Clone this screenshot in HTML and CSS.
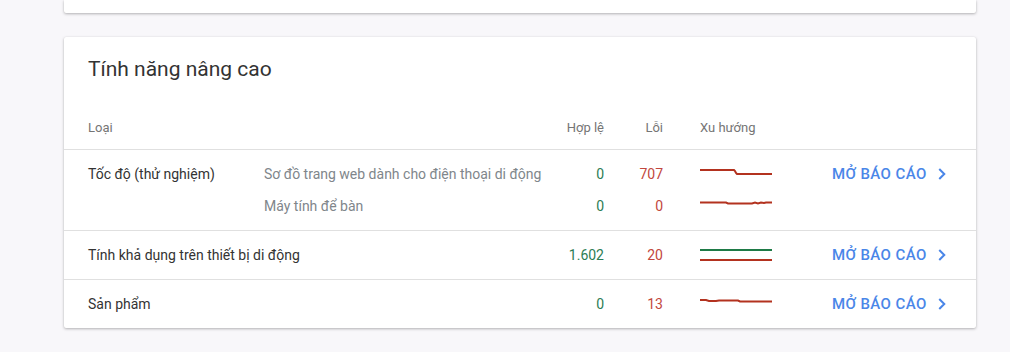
FILE: index.html
```html
<!DOCTYPE html>
<html lang="vi">
<head>
    <meta charset="UTF-8">
    <title>Tính năng nâng cao</title>
    <link rel="stylesheet" href="styles.css">
</head>
<body>
    <!-- Previous card, only its bottom edge is visible -->
    <div class="card card-top"></div>

    <!-- Enhancements card -->
    <div class="card">
        <h2 class="card-title">Tính năng nâng cao</h2>

        <div class="grid head">
            <div class="cell type">Loại</div>
            <div class="cell sub"></div>
            <div class="cell num">Hợp lệ</div>
            <div class="cell num">Lỗi</div>
            <div class="cell trend">Xu hướng</div>
            <div class="cell"></div>
        </div>

        <!-- Speed (experimental) -->
        <div class="row">
            <div class="grid">
                <div class="cell type">Tốc độ (thử nghiệm)</div>
                <div class="cell sub">Sơ đồ trang web dành cho điện thoại di động</div>
                <div class="cell num good">0</div>
                <div class="cell num bad">707</div>
                <div class="cell trend">
                    <svg width="72" height="12" viewBox="0 0 72 12">
                        <polyline class="line-bad" points="0,2 34,2 35,3 36,5 37,6 72,6"/>
                    </svg>
                </div>
                <a class="cell link" href="#">Mở báo cáo
                    <svg width="24" height="24" viewBox="0 0 24 24"><path d="M9 6.5l5.5 5.5L9 17.5" /></svg>
                </a>
            </div>
            <div class="grid">
                <div class="cell type"></div>
                <div class="cell sub">Máy tính để bàn</div>
                <div class="cell num good">0</div>
                <div class="cell num bad">0</div>
                <div class="cell trend">
                    <svg width="72" height="12" viewBox="0 0 72 12">
                        <polyline class="line-bad" points="0,2.5 26,2.5 28,3.5 52,3.5 55,2.5 58,3.5 61,2.5 64,3 66,2.5 72,2.5"/>
                    </svg>
                </div>
                <div class="cell"></div>
            </div>
        </div>

        <!-- Mobile usability -->
        <div class="row">
            <div class="grid">
                <div class="cell type wide">Tính khả dụng trên thiết bị di động</div>
                <div class="cell num good">1.602</div>
                <div class="cell num bad">20</div>
                <div class="cell trend">
                    <svg width="72" height="16" viewBox="0 0 72 16">
                        <polyline class="line-good" points="0,3 72,3"/>
                        <polyline class="line-bad" points="0,13 72,13"/>
                    </svg>
                </div>
                <a class="cell link" href="#">Mở báo cáo
                    <svg width="24" height="24" viewBox="0 0 24 24"><path d="M9 6.5l5.5 5.5L9 17.5" /></svg>
                </a>
            </div>
        </div>

        <!-- Products -->
        <div class="row">
            <div class="grid">
                <div class="cell type wide">Sản phẩm</div>
                <div class="cell num good">0</div>
                <div class="cell num bad">13</div>
                <div class="cell trend">
                    <svg width="72" height="12" viewBox="0 0 72 12">
                        <polyline class="line-bad" points="0,2 6,2 9,3 16,3 19,2.5 26,2.5 38,2.5 40,3.5 72,3.5"/>
                    </svg>
                </div>
                <a class="cell link" href="#">Mở báo cáo
                    <svg width="24" height="24" viewBox="0 0 24 24"><path d="M9 6.5l5.5 5.5L9 17.5" /></svg>
                </a>
            </div>
        </div>
    </div>
</body>
</html>
```

FILE: styles.css
```css
/* Page */
body {
    margin: 0;
    padding: 0 34px 0 64px;
    background: #f8f7fa;
    font-family: Roboto, 'Noto Sans', Arial, sans-serif;
    color: #333;
}

.card {
    background: #fff;
    border-radius: 2px;
    box-shadow: 0 1px 3px rgba(0, 0, 0, 0.28), 0 0 1px rgba(0, 0, 0, 0.08);
    margin-bottom: 24px;
}

.card-top {
    height: 13px;
    border-radius: 0 0 2px 2px;
}

.card-title {
    margin: 0;
    padding: 18px 24px 0;
    height: 46px;
    font-size: 21px;
    font-weight: 400;
    line-height: 28px;
    color: #333;
}

/* Table grid */
.grid {
    display: grid;
    grid-template-columns: 200px 280px 60px 59px 109px 1fr;
    align-items: center;
}

.cell {
    font-size: 14px;
    line-height: 20px;
    white-space: nowrap;
}

.type {
    padding-left: 24px;
}

.type.wide {
    grid-column: span 2;
}

.sub {
    color: #80868b;
}

.num {
    text-align: right;
}

.trend {
    padding-left: 37px;
    display: flex;
    align-items: center;
}

.trend svg {
    display: block;
}

.head {
    height: 42px;
    padding-top: 6px;
    border-bottom: 1px solid #e0e0e0;
}

.head .cell {
    font-size: 13px;
    color: #757575;
}

.row {
    border-bottom: 1px solid #e0e0e0;
    padding: 8px 0;
}

.row:last-child {
    border-bottom: none;
}

.row .grid {
    height: 32px;
}

.good {
    color: #2d7d55;
}

.bad {
    color: #c2473d;
}

.line-bad,
.line-good {
    fill: none;
    stroke-width: 2;
}

.line-bad {
    stroke: #b3321f;
}

.line-good {
    stroke: #1e7a46;
}

.link {
    margin-left: 60px;
    display: flex;
    align-items: center;
    color: #4a86e8;
    font-size: 15px;
    font-weight: 500;
    text-transform: uppercase;
    text-decoration: none;
    letter-spacing: 0.4px;
}

.link svg {
    margin-left: 4px;
    width: 22px;
    height: 22px;
}

.link path {
    fill: none;
    stroke: #4a86e8;
    stroke-width: 2.2;
}
```
